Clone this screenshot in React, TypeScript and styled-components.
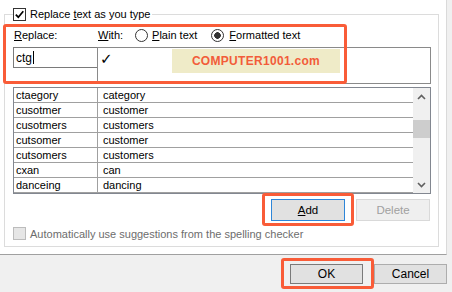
import React from 'react';
import styled, { createGlobalStyle } from 'styled-components';

const entries = [
  ['ctaegory', 'category'],
  ['cusotmer', 'customer'],
  ['cusotmers', 'customers'],
  ['cutsomer', 'customer'],
  ['cutsomers', 'customers'],
  ['cxan', 'can'],
  ['danceing', 'dancing'],
];

const GlobalStyle = createGlobalStyle`
  html, body {
    margin: 0;
    padding: 0;
  }
  body {
    font-family: "Liberation Sans", Arial, sans-serif;
    font-size: 11px;
    color: #000;
  }
`;

const Window = styled.div`
  width: 452px;
  height: 292px;
  background: #f0f0f0;
  display: flex;
  flex-direction: column;
  overflow: hidden;
`;

const Panel = styled.div`
  width: 447px;
  height: 255px;
  box-sizing: border-box;
  background: #fff;
  border-right: 1px solid #dadada;
  border-bottom: 1px solid #a0a0a0;
  padding: 8px 0 0 4px;
`;

const Group = styled.fieldset`
  margin: 0;
  min-width: 0;
  width: 435px;
  box-sizing: border-box;
  padding: 0 7px 6px 8px;
  border: 1px solid #dcdcdc;
  display: flex;
  flex-direction: column;
`;

const Legend = styled.legend`
  display: flex;
  align-items: center;
  gap: 4px;
  height: 13px;
  line-height: 13px;
  padding: 0 2px 0 0;
`;

const Box = styled.span<{ $disabled?: boolean }>`
  width: 13px;
  height: 13px;
  box-sizing: border-box;
  border: 1px solid ${({ $disabled }) => ($disabled ? '#bcbcbc' : '#333')};
  background: ${({ $disabled }) => ($disabled ? '#e6e6e6' : '#fff')};
  display: flex;
  align-items: center;
  justify-content: center;
  flex: none;
`;

const Highlight = styled.div<{ $l: number; $t: number; $w: number; $h: number }>`
  position: absolute;
  left: ${({ $l }) => $l}px;
  top: ${({ $t }) => $t}px;
  width: ${({ $w }) => $w}px;
  height: ${({ $h }) => $h}px;
  box-sizing: border-box;
  border: 3px solid #f95c38;
  border-radius: 3px;
  pointer-events: none;
`;

const ReplaceArea = styled.div`
  position: relative;
  margin-top: 7px;
`;

const LabelRow = styled.div`
  display: flex;
  align-items: center;
  height: 14px;
  margin-bottom: 5px;
`;

const Label = styled.span<{ $w?: number }>`
  width: ${({ $w }) => ($w ? `${$w}px` : 'auto')};
  flex: none;
  white-space: nowrap;
`;

const Radio = styled.span<{ $checked?: boolean }>`
  width: 13px;
  height: 13px;
  box-sizing: border-box;
  border-radius: 50%;
  border: 1px solid #333;
  background: ${({ $checked }) =>
    $checked ? 'radial-gradient(circle, #333 0 3px, #fff 3.6px)' : '#fff'};
  flex: none;
`;

const EntryRow = styled.div`
  display: grid;
  grid-template-columns: 84px 334px;
  align-items: start;
`;

const ReplaceInput = styled.div`
  height: 21px;
  box-sizing: border-box;
  border: 1px solid #7a7a7a;
  border-right: none;
  padding-left: 2px;
  display: flex;
  align-items: center;
  font-size: 12px;
`;

const Caret = styled.span`
  width: 1px;
  height: 13px;
  background: #000;
  margin-left: 1px;
`;

const WithBox = styled.div`
  height: 37px;
  box-sizing: border-box;
  border: 1px solid #8a8a8a;
  display: flex;
  align-items: flex-start;
  padding-top: 1px;
`;

const Tick = styled.span`
  width: 74px;
  padding: 2px 0 0 2px;
  box-sizing: border-box;
  font-family: "DejaVu Sans", sans-serif;
  font-size: 15px;
  line-height: 16px;
`;

const Watermark = styled.div`
  width: 168px;
  height: 24px;
  background: #efebc8;
  color: #f25c3a;
  font-weight: bold;
  font-size: 12px;
  letter-spacing: 0.3px;
  display: flex;
  align-items: center;
  justify-content: center;
`;

const List = styled.div`
  margin-top: 3px;
  height: 107px;
  box-sizing: border-box;
  border: 1px solid #828790;
  display: flex;
`;

const Rows = styled.div`
  flex: 1;
  display: flex;
  flex-direction: column;
`;

const Row = styled.div`
  height: 15px;
  box-sizing: border-box;
  border-bottom: 1px solid #a0a0a0;
  display: grid;
  grid-template-columns: 84px 1fr;
  line-height: 14px;
`;

const Cell = styled.span<{ $first?: boolean }>`
  padding-left: ${({ $first }) => ($first ? 2 : 5)}px;
  border-right: ${({ $first }) => ($first ? '1px solid #a0a0a0' : 'none')};
`;

const ScrollBar = styled.div`
  width: 17px;
  background: #f0f0f0;
  display: flex;
  flex-direction: column;
`;

const ArrowBox = styled.div`
  height: 17px;
  display: flex;
  align-items: center;
  justify-content: center;
`;

const Track = styled.div`
  flex: 1;
`;

const Thumb = styled.div`
  margin-top: 15px;
  height: 18px;
  background: #cdcdcd;
`;

const ButtonRow = styled.div`
  display: flex;
  justify-content: flex-end;
  gap: 11px;
  margin-top: 5px;
  padding-right: 1px;
`;

const Anchor = styled.div`
  position: relative;
  display: flex;
`;

const Button = styled.div<{ $kind?: 'focus' | 'disabled' | 'default' }>`
  width: 74px;
  height: 22px;
  box-sizing: border-box;
  display: flex;
  align-items: center;
  justify-content: center;
  background: ${({ $kind }) => ($kind === 'disabled' ? '#efefef' : '#e1e1e1')};
  color: ${({ $kind }) => ($kind === 'disabled' ? '#a0a0a0' : '#000')};
  border: 1px solid
    ${({ $kind }) => ($kind === 'focus' ? '#2e86d8' : $kind === 'disabled' ? '#d9d9d9' : '#adadad')};
  font-size: 11.5px;
`;

const CheckRow = styled.div`
  display: flex;
  align-items: center;
  gap: 4px;
  margin-top: 6px;
  height: 13px;
  color: #6d6d6d;
  white-space: nowrap;
`;

const Footer = styled.div`
  flex: 1;
  display: flex;
  justify-content: flex-end;
  align-items: flex-start;
  gap: 11px;
  padding: 9px 5px 0 0;
`;

const FooterButton = styled(Button)`
  width: 73px;
  height: 20px;
  font-size: 12px;
  border-color: ${({ $kind }) => ($kind === 'focus' ? '#7a7a7a' : '#adadad')};
`;

const Chevron = ({ up }: { up?: boolean }) => (
  <svg width="9" height="6" viewBox="0 0 9 6">
    <polyline
      points={up ? '1,5 4.5,1.5 8,5' : '1,1 4.5,4.5 8,1'}
      fill="none"
      stroke="#606060"
      strokeWidth="1.6"
    />
  </svg>
);

const App = () => (
  <>
    <GlobalStyle />
    <Window>
      <Panel>
        <Group>
          <Legend>
            <Box>
              <svg width="11" height="11" viewBox="0 0 11 11">
                <polyline points="1.8,5.6 4.3,8.2 9.3,2.2" fill="none" stroke="#000" strokeWidth="1.7" />
              </svg>
            </Box>
            <span>
              Replace <u>t</u>ext as you type
            </span>
          </Legend>

          <ReplaceArea>
            <LabelRow>
              <Label $w={84} style={{ paddingLeft: 1 }}>
                <u>R</u>eplace:
              </Label>
              <Label>
                <u>W</u>ith:
              </Label>
              <Radio style={{ marginLeft: 12 }} />
              <Label style={{ marginLeft: 4 }}>
                <u>P</u>lain text
              </Label>
              <Radio $checked style={{ marginLeft: 14 }} />
              <Label style={{ marginLeft: 5 }}>
                <u>F</u>ormatted text
              </Label>
            </LabelRow>
            <EntryRow>
              <ReplaceInput>
                ctg
                <Caret />
              </ReplaceInput>
              <WithBox>
                <Tick>✓</Tick>
                <Watermark>COMPUTER1001.com</Watermark>
              </WithBox>
            </EntryRow>
            <Highlight $l={-10} $t={-4} $w={344} $h={60} />
          </ReplaceArea>

          <List>
            <Rows>
              {entries.map(([from, to]) => (
                <Row key={from}>
                  <Cell $first>{from}</Cell>
                  <Cell>{to}</Cell>
                </Row>
              ))}
            </Rows>
            <ScrollBar>
              <ArrowBox>
                <Chevron up />
              </ArrowBox>
              <Track>
                <Thumb />
              </Track>
              <ArrowBox>
                <Chevron />
              </ArrowBox>
            </ScrollBar>
          </List>

          <ButtonRow>
            <Anchor>
              <Button $kind="focus">
                <u>A</u>dd
              </Button>
              <Highlight $l={-9} $t={-6} $w={92} $h={33} />
            </Anchor>
            <Button $kind="disabled">Delete</Button>
          </ButtonRow>

          <CheckRow>
            <Box $disabled />
            <span>Automatically use suggestions from the spelling checker</span>
          </CheckRow>
        </Group>
      </Panel>
      <Footer>
        <Anchor>
          <FooterButton $kind="focus">OK</FooterButton>
          <Highlight $l={-9} $t={-6} $w={93} $h={31} />
        </Anchor>
        <FooterButton>Cancel</FooterButton>
      </Footer>
    </Window>
  </>
);

export default App;
